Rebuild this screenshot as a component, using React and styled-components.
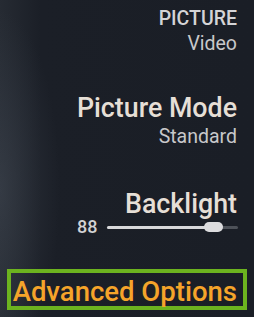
import React from 'react';
import styled, { createGlobalStyle } from 'styled-components';

const Global = createGlobalStyle`
  html, body {
    margin: 0;
    padding: 0;
    background: #1b1f27;
  }
  body {
    font-family: Roboto, "Noto Sans", sans-serif;
  }
`;

export default function App() {
  return (
    <>
      <Global />
      <Screen>
        <Item top={8}>
          <Title small>PICTURE</Title>
          <Value>Video</Value>
        </Item>
        <Item top={37}>
          <Title>Picture Mode</Title>
          <Value>Standard</Value>
        </Item>
        <Item top={40}>
          <Title>Backlight</Title>
          <SliderRow>
            <SliderValue>88</SliderValue>
            <Track>
              <Fill style={{ width: `${(105 / 130) * 100}%` }} />
              <Knob style={{ left: `${(96 / 130) * 100}%` }} />
            </Track>
          </SliderRow>
        </Item>
        <Focus>
          <FocusLabel>Advanced Options</FocusLabel>
        </Focus>
      </Screen>
    </>
  );
}

const Screen = styled.div`
  width: 254px;
  height: 317px;
  box-sizing: border-box;
  padding: 0 7px;
  display: flex;
  flex-direction: column;
  align-items: flex-end;
  overflow: hidden;
  background:
    radial-gradient(ellipse 60px 180px at 0% 60%, rgba(80, 88, 100, 0.35), rgba(80, 88, 100, 0) 100%),
    linear-gradient(90deg, #262b33 0px, #1b1f27 40px, #1a1e26 100%);
`;

const Item = styled.div`
  display: flex;
  flex-direction: column;
  align-items: flex-end;
  margin: ${(p) => p.top}px 10px 0 0;
`;

const Title = styled.div`
  font-size: ${(p) => (p.small ? '19.5px' : '26.8px')};
  font-weight: 500;
  line-height: ${(p) => (p.small ? '22px' : '30px')};
  color: ${(p) => (p.small ? '#d4d4d6' : '#e6dfd6')};
  white-space: nowrap;
`;

const Value = styled.div`
  margin-top: 2px;
  font-size: 19.5px;
  line-height: 24px;
  color: #c8c8ca;
  white-space: nowrap;
`;

const SliderRow = styled.div`
  display: flex;
  align-items: center;
  gap: 10px;
  margin: -3px -1px 0 0;
  width: 161px;
`;

const SliderValue = styled.div`
  font-size: 18px;
  font-weight: 500;
  line-height: 22px;
  color: #d2d2d4;
`;

const Track = styled.div`
  position: relative;
  flex: 1;
  height: 3px;
  border-radius: 2px;
  background: #4d5158;
`;

const Fill = styled.div`
  height: 100%;
  border-radius: 2px;
  background: #d8d8da;
`;

const Knob = styled.div`
  position: absolute;
  top: 50%;
  width: 19px;
  height: 10px;
  border-radius: 5px;
  background: #dcdcde;
  transform: translate(0, -50%);
`;

const Focus = styled.div`
  align-self: stretch;
  margin-top: 31px;
  border: 4px solid #6cb31f;
  padding: 5px 6px 0 4px;
  display: flex;
  justify-content: flex-end;
`;

const FocusLabel = styled.div`
  font-size: 27.5px;
  font-weight: 500;
  line-height: 28px;
  color: #f5a42a;
  white-space: nowrap;
`;
